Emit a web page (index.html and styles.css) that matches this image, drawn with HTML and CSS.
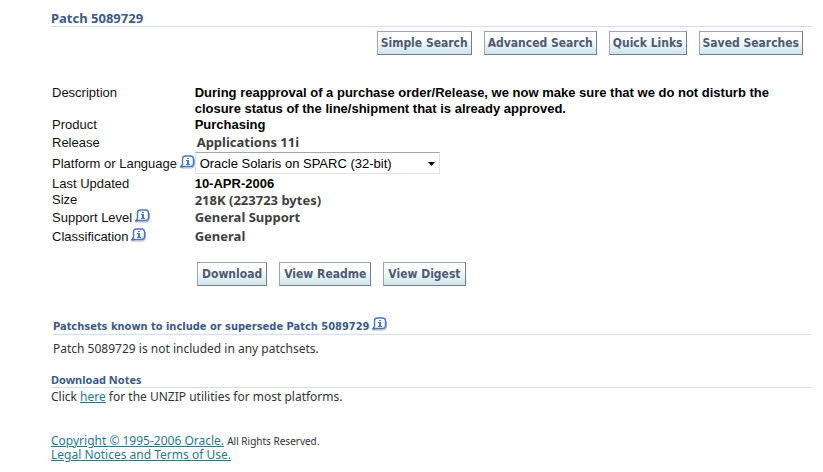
FILE: index.html
```html
<!DOCTYPE html>
<html lang="en">
<head>
    <meta charset="UTF-8">
    <meta name="viewport" content="width=device-width, initial-scale=1.0">
    <title>Patch 5089729</title>
    <link rel="stylesheet" href="styles.css">
</head>
<body>
    <svg class="defs" aria-hidden="true">
        <symbol id="info" viewBox="0 0 15 14">
            <path d="M1 13H11.500Q14.500 12.500 14.500 9.500V4" fill="none" stroke="#aab0bc"/>
            <path d="M5.500 1H10.500Q13.500 1 13.500 4V8.500Q13.500 11.500 10.500 11.500H1L2.500 9.500V4Q2.500 1 5.500 1Z" fill="#fff" stroke="#4a74c4" stroke-width="1.400"/>
            <path d="M0 12H3" stroke="#5f7599"/>
            <path d="M7 3H9V4H7ZM6 5H9V9H10V10H6V9H7V6H6Z" fill="#3a7cd0"/>
        </symbol>
    </svg>

    <h1 class="title">Patch 5089729</h1>
    <nav class="toolbar">
        <button type="button" class="btn">Simple Search</button>
        <button type="button" class="btn">Advanced Search</button>
        <button type="button" class="btn">Quick Links</button>
        <button type="button" class="btn">Saved Searches</button>
    </nav>

    <table class="details">
        <tr>
            <th scope="row">Description</th>
            <td class="strong">During reapproval of a purchase order/Release, we now make sure that we do not disturb the closure status of the line/shipment that is already approved.</td>
        </tr>
        <tr>
            <th scope="row">Product</th>
            <td class="strong">Purchasing</td>
        </tr>
        <tr class="release">
            <th scope="row">Release</th>
            <td>Applications 11i</td>
        </tr>
        <tr class="platform">
            <th scope="row"><label for="platform">Platform or Language</label> <a href="#" class="info" aria-label="Platform help"><svg><use href="#info"/></svg></a></th>
            <td>
                <div class="select">
                    <select id="platform">
                        <option>Oracle Solaris on SPARC (32-bit)</option>
                    </select>
                    <svg class="arrow" viewBox="0 0 7 4"><path d="M0 0H7L3.500 4Z"/></svg>
                </div>
            </td>
        </tr>
        <tr>
            <th scope="row">Last Updated</th>
            <td class="strong">10-APR-2006</td>
        </tr>
        <tr>
            <th scope="row">Size</th>
            <td>218K (223723 bytes)</td>
        </tr>
        <tr class="tall">
            <th scope="row">Support Level <a href="#" class="info" aria-label="Support level help"><svg><use href="#info"/></svg></a></th>
            <td>General Support</td>
        </tr>
        <tr class="tall">
            <th scope="row">Classification <a href="#" class="info" aria-label="Classification help"><svg><use href="#info"/></svg></a></th>
            <td>General</td>
        </tr>
    </table>

    <div class="actions">
        <button type="button" class="btn">Download</button>
        <button type="button" class="btn">View Readme</button>
        <button type="button" class="btn">View Digest</button>
    </div>

    <section class="patchsets">
        <h2>Patchsets known to include or supersede Patch 5089729 <a href="#" class="info" aria-label="Patchsets help"><svg><use href="#info"/></svg></a></h2>
        <p>Patch 5089729 is not included in any patchsets.</p>
    </section>

    <section class="notes">
        <h2>Download Notes</h2>
        <p>Click <a href="#">here</a> for the UNZIP utilities for most platforms.</p>
    </section>

    <footer class="footer">
        <a href="#">Copyright © 1995-2006 Oracle.</a> <small>All Rights Reserved.</small><br>
        <a href="#">Legal Notices and Terms of Use.</a>
    </footer>
</body>
</html>
```
FILE: styles.css
```css
body {
    margin: 0;
    padding: 11px 11px 8px 51px;
    background: #fff;
    color: #333;
    font-family: "Noto Sans", sans-serif;
    font-size: 12px;
    line-height: 14px;
}
.defs {
    display: none;
}
a {
    color: #1f7a8c;
}
h1, h2, p {
    margin: 0;
}
.title {
    border-bottom: 1px solid #cfe0f1;
    color: #3a5a87;
    font-size: 13px;
    line-height: 15px;
}
.toolbar {
    display: flex;
    justify-content: flex-end;
    gap: 12px;
    padding: 4px 9px 0 0;
}
.btn {
    height: 24px;
    padding: 0 4px;
    border: 1px solid;
    border-color: #a0a3b4 #747b92 #747b92 #a0a3b4;
    background: linear-gradient(#fff 30%, #cde5ec);
    color: #4f5a73;
    font-family: "DejaVu Sans Condensed", "Noto Sans", sans-serif;
    font-size: 12px;
    font-weight: bold;
    line-height: 14px;
    white-space: nowrap;
}
.toolbar .btn {
    padding: 0 3px;
}

.details {
    margin-top: 30px;
    border-collapse: collapse;
    line-height: 16px;
}
.details th {
    width: 142px;
    padding: 0 0 0 1px;
    color: #111;
    font-family: "Liberation Sans", Arial, sans-serif;
    font-size: 13px;
    font-weight: normal;
    text-align: left;
    vertical-align: top;
    white-space: nowrap;
}
.details td {
    padding: 0;
    color: #404040;
    font-size: 13px;
    font-weight: bold;
    vertical-align: top;
}
.details .strong {
    color: #000;
    font-family: "Liberation Sans", Arial, sans-serif;
}
.details .release td {
    padding-left: 2px;
}
.release, .tall {
    line-height: 19px;
}
.platform {
    line-height: 24px;
}
.info {
    display: inline-block;
    width: 15px;
    height: 14px;
    margin-left: -1px;
    line-height: 14px;
    vertical-align: -1px;
}
.info svg {
    display: block;
    width: 15px;
    height: 14px;
}
.select {
    position: relative;
    width: 245px;
}
.select select {
    display: block;
    appearance: none;
    width: 100%;
    height: 22px;
    padding: 0 20px 0 4px;
    border: 1px solid #dfe1e6;
    border-top-color: #a5a7b0;
    border-radius: 0;
    background: #fff;
    color: #000;
    font-family: "Liberation Sans", Arial, sans-serif;
    font-size: 13px;
}
.arrow {
    position: absolute;
    top: 10px;
    right: 5px;
    width: 7px;
    height: 4px;
    pointer-events: none;
}

.actions {
    display: flex;
    gap: 12px;
    padding: 16px 0 0 146px;
}

h2 {
    color: #3a5a87;
    border-bottom: 1px solid #cfe0f1;
    font-size: 11px;
    line-height: 14px;
}
.patchsets {
    margin: 31px 2px 0;
}
.patchsets h2 {
    font-family: "DejaVu Sans Condensed", "Noto Sans", sans-serif;
}
.patchsets p {
    margin-top: 7px;
}
.notes {
    margin-top: 17px;
}
.notes p {
    margin-top: 2px;
}
.footer {
    margin-top: 30px;
}
.footer small {
    font-size: 10px;
}
```
